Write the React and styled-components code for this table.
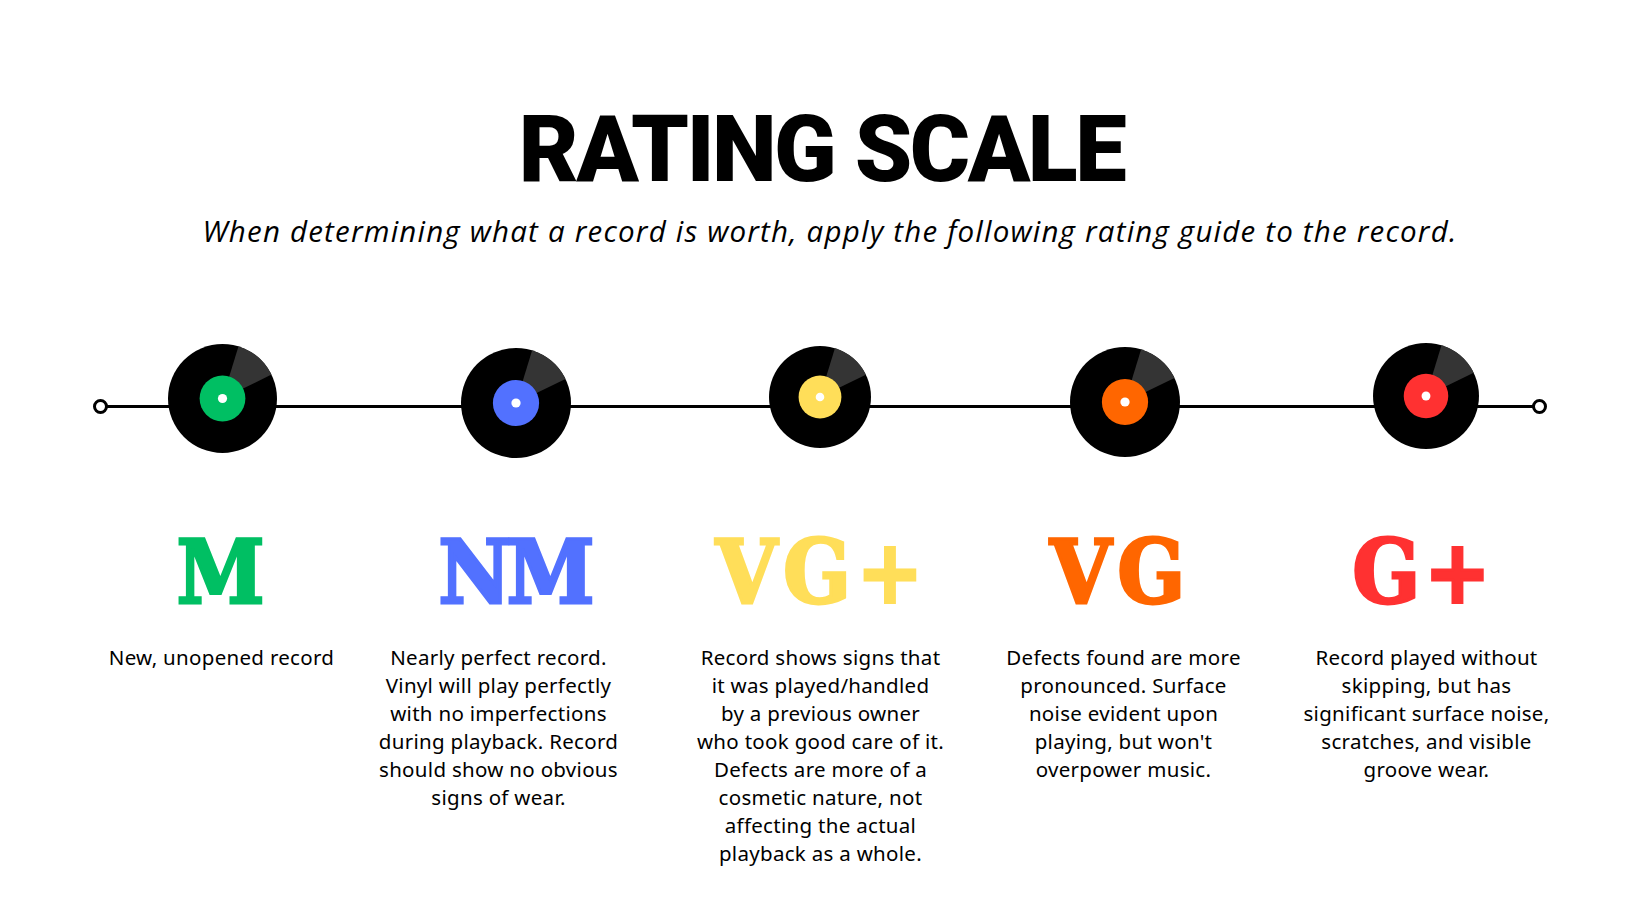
import React from 'react';
import styled, { createGlobalStyle } from 'styled-components';

const GlobalStyle = createGlobalStyle`
html, body {
    margin:0;
    padding:0;
    background:#ffffff;
}
`;

const Page = styled.div`
width:1640px;
height:924px;
background:#ffffff;
display:flex;
flex-direction:column;
align-items:center;
overflow:hidden;
`;

const Title = styled.h1`
margin:104px 0 0 0;
padding-left:3px;
font-family:Roboto, "Liberation Sans", sans-serif;
font-weight:900;
font-size:92px;
line-height:1;
letter-spacing:-2.5px;
color:#000;
white-space:nowrap;
`;

const Subtitle = styled.p`
margin:20px 0 0 0;
padding-left:20px;
font-family:"Open Sans", "Noto Sans", sans-serif;
font-style:italic;
font-size:29.5px;
line-height:1;
letter-spacing:1.2px;
color:#000;
white-space:nowrap;
`;

const Timeline = styled.div`
position:relative;
align-self:stretch;
margin-top:94px;
height:120px;
display:grid;
grid-template-columns:repeat(5, 301px);
padding-left:72px;
align-items:center;
justify-items:center;

&::before{
    content:'';
    position:absolute;
    left:100px;
    right:101px;
    top:65px;
    height:3px;
    background:#000;
}
`;

const EndDot = styled.span`
position:absolute;
top:59px;
${props => props.$side}:93px;
width:9px;
height:9px;
border:3px solid #000;
border-radius:50%;
background:#fff;
`;

const shiftMargin = shift =>
    `${shift < 0 ? -shift * 2 : 0}px 0 ${shift > 0 ? shift * 2 : 0}px`;

const DiscSvg = styled.svg`
position:relative;
display:block;
width:${props => props.$size}px;
height:${props => props.$size}px;
margin:${props => props.$dy * 2}px ${props => shiftMargin(props.$shift)};
`;

const Grades = styled.div`
align-self:stretch;
margin-top:68px;
display:grid;
grid-template-columns:repeat(5, 301px);
padding-left:72px;
justify-items:center;
`;

const Grade = styled.div`
margin:0 ${props => shiftMargin(props.$shift)};
font-family:"DejaVu Serif Condensed", "DejaVu Serif", serif;
font-stretch:condensed;
font-weight:700;
font-size:88px;
line-height:1;
letter-spacing:${props => props.$tracking}px;
color:${props => props.$color};
-webkit-text-stroke:3px ${props => props.$color};
white-space:nowrap;
`;

const Descriptions = styled.div`
align-self:stretch;
margin-top:27px;
display:grid;
grid-template-columns:repeat(5, 301px);
padding-left:72px;
justify-items:center;
`;

const Description = styled.p`
margin:0 ${props => shiftMargin(props.$shift)};
font-family:"Noto Sans", "Open Sans", sans-serif;
font-size:20.5px;
line-height:28px;
letter-spacing:0.3px;
color:#000;
text-align:center;
white-space:nowrap;
`;

const ratings = [
    {
        grade: 'M', color: '#00bf63', size: 109, dy: -1, tracking: -2,
        discShift: 0, gradeShift: -3, textShift: -1,
        lines: ['New, unopened record'],
    },
    {
        grade: 'NM', color: '#5271ff', size: 110, dy: 3, tracking: -4,
        discShift: -8, gradeShift: -9, textShift: -25,
        lines: ['Nearly perfect record.', 'Vinyl will play perfectly', 'with no imperfections', 'during playback. Record', 'should show no obvious', 'signs of wear.'],
    },
    {
        grade: 'VG+', color: '#ffde59', size: 102, dy: -3, tracking: 6,
        discShift: -5, gradeShift: -2, textShift: -4,
        lines: ['Record shows signs that', 'it was played/handled', 'by a previous owner', 'who took good care of it.', 'Defects are more of a', 'cosmetic nature, not', 'affecting the actual', 'playback as a whole.'],
    },
    {
        grade: 'VG', color: '#ff6600', size: 110, dy: 2, tracking: 6,
        discShift: -1, gradeShift: -5, textShift: -2,
        lines: ['Defects found are more', 'pronounced. Surface', 'noise evident upon', 'playing, but won\'t', 'overpower music.'],
    },
    {
        grade: 'G+', color: '#ff3131', size: 106, dy: -4, tracking: 4,
        discShift: -1, gradeShift: -3, textShift: 0,
        lines: ['Record played without', 'skipping, but has', 'significant surface noise,', 'scratches, and visible', 'groove wear.'],
    },
];

function Disc({ color, size, dy, shift }) {
    return <DiscSvg $size={size} $dy={dy} $shift={shift} viewBox="-50 -50 100 100">
        <circle cx="0" cy="0" r="50" fill="#000" />
        <path d="M0 0 L14.62 -47.81 A50 50 0 0 1 44.94 -21.92 Z" fill="#343434" />
        <circle cx="0" cy="0" r="21" fill={color} />
        <circle cx="0" cy="0" r="4.2" fill="#fff" />
    </DiscSvg>;
}

function App() {
    return <Page>
        <GlobalStyle />
        <Title>RATING SCALE</Title>
        <Subtitle>When determining what a record is worth, apply the following rating guide to the record.</Subtitle>
        <Timeline>
            <EndDot $side="left" />
            {ratings.map(r => <Disc key={r.grade} color={r.color} size={r.size} dy={r.dy} shift={r.discShift} />)}
            <EndDot $side="right" />
        </Timeline>
        <Grades>
            {ratings.map(r => <Grade key={r.grade} $color={r.color} $shift={r.gradeShift} $tracking={r.tracking}>{r.grade}</Grade>)}
        </Grades>
        <Descriptions>
            {ratings.map(r => <Description key={r.grade} $shift={r.textShift}>
                {r.lines.map((line, i) => <React.Fragment key={i}>{line}{i < r.lines.length - 1 && <br />}</React.Fragment>)}
            </Description>)}
        </Descriptions>
    </Page>;
}

export default App;
